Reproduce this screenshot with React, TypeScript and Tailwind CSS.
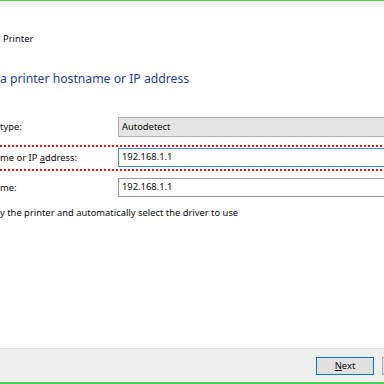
import React from "react";

// Clipped wizard text: the part before the visible window hangs off the left edge.
function Cut({ pre, children }: { pre: string; children: React.ReactNode }) {
  return (
    <span className="relative inline-block whitespace-nowrap">
      <span className="absolute right-full top-0 whitespace-pre">{pre}</span>
      {children}
    </span>
  );
}

function Dots() {
  return (
    <div className="h-[2px] w-full bg-[repeating-linear-gradient(90deg,#e8141b_0_2px,transparent_2px_4px)]" />
  );
}

export default function App() {
  return (
    <div className="w-[384px] h-[384px] overflow-hidden bg-white flex flex-col font-['Noto_Sans',sans-serif] text-[9.4px] text-[#0a0a0a]">
      <div className="h-px bg-[#4fcf4f]" />

      <div className="mt-[31px] pl-[3px] leading-[14px]">
        <Cut pre="Add ">Printer</Cut>
      </div>

      <h1 className="mt-[24px] text-[12.2px] leading-[18px] text-[#1f3d9c]">
        <Cut pre="Type ">a printer hostname or IP address</Cut>
      </h1>

      {/* device type */}
      <div className="mt-[29px] flex items-center h-[20px]">
        <div className="w-[118px] shrink-0 leading-[14px]">
          <Cut pre="Device ">type:</Cut>
        </div>
        <div className="h-full w-[300px] shrink-0 flex items-center pl-[3px] bg-[#e5e5e5] border border-[#adadad]">
          Autodetect
        </div>
      </div>

      {/* hostname row, marked in red */}
      <div className="mt-[8px]">
        <Dots />
        <div className="mt-px flex items-center h-[19px]">
          <div className="w-[118px] shrink-0 leading-[14px]">
            <Cut pre="Hostna">
              me or IP <span className="underline">a</span>ddress:
            </Cut>
          </div>
          <div className="h-full w-[300px] shrink-0 flex items-center pl-[3px] bg-white border border-[#3a8ee6]">
            192.168.1.1
          </div>
        </div>
        <div className="mt-[2px]">
          <Dots />
        </div>
      </div>

      {/* port name */}
      <div className="mt-[7px] flex items-center h-[19px]">
        <div className="w-[118px] shrink-0 leading-[14px]">
          <Cut pre="Port na">me:</Cut>
        </div>
        <div className="h-full w-[300px] shrink-0 flex items-center pl-[3px] bg-white border border-[#9b9b9b]">
          192.168.1.1
        </div>
      </div>

      <div className="mt-[9px] leading-[14px]">
        <Cut pre="Quer">y the printer and automatically select the driver to use</Cut>
      </div>

      <div className="mt-auto h-[34px] bg-[#f0f0f0] border-t border-[#dfdfdf] flex items-start pt-[8px] pl-[316px] gap-[8px]">
        <button className="w-[58px] h-[18px] shrink-0 flex items-center justify-center bg-[#e1e1e1] border border-[#0078d7] leading-none">
          <span className="underline">N</span>ext
        </button>
        <button className="w-[58px] h-[18px] shrink-0 flex items-center justify-center bg-[#e1e1e1] border border-[#adadad] leading-none">
          Cancel
        </button>
      </div>
      <div className="h-[2px] bg-[#4fcf4f]" />
    </div>
  );
}
